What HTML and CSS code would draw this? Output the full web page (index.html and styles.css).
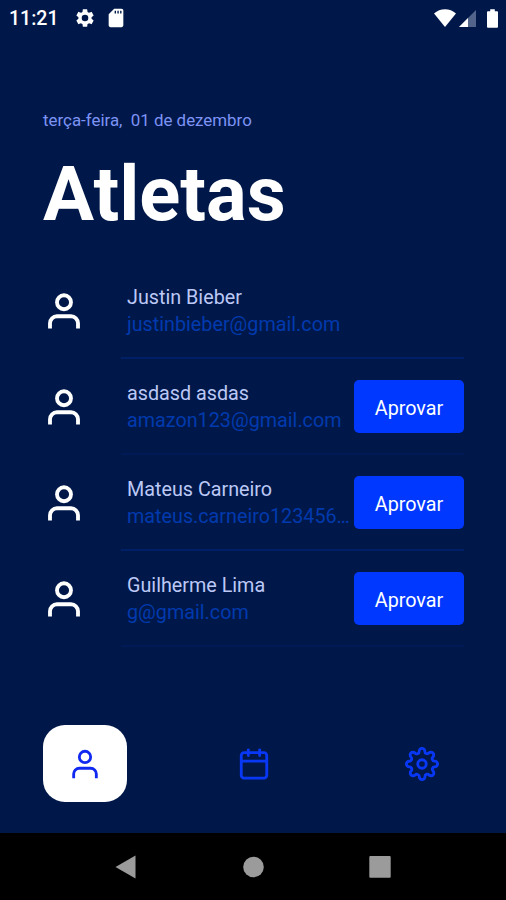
FILE: index.html
```html
<!DOCTYPE html>
<html lang="pt-BR">

<head>
    <meta charset="UTF-8">
    <meta name="viewport" content="width=device-width, initial-scale=1.0">
    <title>Atletas</title>
    <link rel="stylesheet" href="styles.css">
</head>

<body>
    <svg class="sprite" width="0" height="0">
        <symbol id="user" viewBox="0 0 24 24">
            <path d="M20 22V19a4 4 0 0 0-4-4H8a4 4 0 0 0-4 4v3"/>
            <circle cx="12" cy="7" r="4"/>
        </symbol>
    </svg>

    <header class="status-bar">
        <span class="clock">11:21</span>
        <svg class="status-gear" width="22" height="22" viewBox="0 0 24 24"><path fill-rule="evenodd" d="M19.14 12.94c.04-.3.06-.61.06-.94 0-.32-.02-.64-.07-.94l2.03-1.58a.49.49 0 0 0 .12-.61l-1.92-3.32a.488.488 0 0 0-.59-.22l-2.39.96c-.5-.38-1.03-.7-1.62-.94l-.36-2.54a.484.484 0 0 0-.48-.41h-3.84c-.24 0-.43.17-.47.41l-.36 2.54c-.59.24-1.13.57-1.62.94l-2.39-.96c-.22-.08-.47 0-.59.22L2.74 8.87c-.12.21-.08.47.12.61l2.03 1.58c-.05.3-.09.63-.09.94s.02.64.07.94l-2.03 1.58a.49.49 0 0 0-.12.61l1.92 3.32c.12.22.37.29.59.22l2.39-.96c.5.38 1.03.7 1.62.94l.36 2.54c.05.24.24.41.48.41h3.84c.24 0 .44-.17.47-.41l.36-2.54c.59-.24 1.13-.56 1.62-.94l2.39.96c.22.08.47 0 .59-.22l1.92-3.32c.12-.22.07-.47-.12-.61l-2.01-1.58zM12 15.6A3.6 3.6 0 1 1 12 8.4a3.6 3.6 0 0 1 0 7.2z"/></svg>
        <svg class="status-card" width="22" height="22" viewBox="0 0 24 24"><path d="M18 2h-8L4 8v12c0 1.1.9 2 2 2h12c1.1 0 2-.9 2-2V4c0-1.1-.9-2-2-2zm-6 5h-1.500V4H12v3zm3 0h-1.500V4H15v3zm3 0h-1.500V4H18v3z"/></svg>
        <svg class="status-wifi" width="22" height="18" viewBox="0 0 22 18"><path d="M0 4.500C6-1.200 16-1.200 22 4.500L11 18z"/></svg>
        <svg class="status-signal" width="17" height="17" viewBox="0 0 17 17"><path class="dim" d="M17 0v17H0z"/><path d="M9 8v9H0z"/></svg>
        <svg class="status-battery" width="11" height="19" viewBox="0 0 12 20"><path d="M3.500 0h5v2H11q1 0 1 1v16q0 1-1 1H1q-1 0-1-1V3q0-1 1-1h2.500z"/></svg>
    </header>

    <main>
        <p class="date">terça-feira,&nbsp; 01 de dezembro</p>
        <h1>Atletas</h1>

        <ul class="athletes">
            <li>
                <svg class="avatar"><use href="#user"/></svg>
                <div class="row">
                    <div class="info">
                        <p class="name">Justin Bieber</p>
                        <p class="email">justinbieber@gmail.com</p>
                    </div>
                </div>
            </li>
            <li>
                <svg class="avatar"><use href="#user"/></svg>
                <div class="row faint">
                    <div class="info">
                        <p class="name">asdasd asdas</p>
                        <p class="email">amazon123@gmail.com</p>
                    </div>
                    <button class="approve">Aprovar</button>
                </div>
            </li>
            <li>
                <svg class="avatar"><use href="#user"/></svg>
                <div class="row">
                    <div class="info">
                        <p class="name">Mateus Carneiro</p>
                        <p class="email">mateus.carneiro123456…</p>
                    </div>
                    <button class="approve">Aprovar</button>
                </div>
            </li>
            <li>
                <svg class="avatar"><use href="#user"/></svg>
                <div class="row faint">
                    <div class="info">
                        <p class="name">Guilherme Lima</p>
                        <p class="email">g@gmail.com</p>
                    </div>
                    <button class="approve">Aprovar</button>
                </div>
            </li>
        </ul>
    </main>

    <nav class="tabs">
        <a class="tab active"><svg><use href="#user"/></svg></a>
        <a class="tab">
            <svg viewBox="0 0 24 24"><rect x="3" y="4" width="18" height="18" rx="2"/><path d="M16 2v4M8 2v4M3 10h18"/></svg>
        </a>
        <a class="tab">
            <svg viewBox="0 0 24 24"><circle cx="12" cy="12" r="3"/><path d="M19.4 15a1.65 1.65 0 0 0 .33 1.82l.06.06a2 2 0 0 1 0 2.83 2 2 0 0 1-2.83 0l-.06-.06a1.65 1.65 0 0 0-1.82-.33 1.65 1.65 0 0 0-1 1.51V21a2 2 0 0 1-2 2 2 2 0 0 1-2-2v-.09A1.65 1.65 0 0 0 9 19.4a1.65 1.65 0 0 0-1.82.33l-.06.06a2 2 0 0 1-2.83 0 2 2 0 0 1 0-2.83l.06-.06a1.65 1.65 0 0 0 .33-1.82 1.65 1.65 0 0 0-1.51-1H3a2 2 0 0 1-2-2 2 2 0 0 1 2-2h.09A1.65 1.65 0 0 0 4.6 9a1.65 1.65 0 0 0-.33-1.82l-.06-.06a2 2 0 0 1 0-2.83 2 2 0 0 1 2.83 0l.06.06a1.65 1.65 0 0 0 1.82.33H9a1.65 1.65 0 0 0 1-1.51V3a2 2 0 0 1 2-2 2 2 0 0 1 2 2v.09a1.65 1.65 0 0 0 1 1.51 1.65 1.65 0 0 0 1.82-.33l.06-.06a2 2 0 0 1 2.83 0 2 2 0 0 1 0 2.83l-.06.06a1.65 1.65 0 0 0-.33 1.82V9a1.65 1.65 0 0 0 1.51 1H21a2 2 0 0 1 2 2 2 2 0 0 1-2 2h-.09a1.65 1.65 0 0 0-1.51 1z"/></svg>
        </a>
    </nav>

    <footer class="system-bar">
        <svg width="22" height="24" viewBox="0 0 22 24"><path d="M.5 12L20.500 .5v23z"/></svg>
        <svg width="22" height="24" viewBox="0 0 22 24"><circle cx="11.500" cy="12" r="10.300"/></svg>
        <svg width="22" height="24" viewBox="0 0 22 24"><rect x=".3" y="1" width="21.400" height="21.800" rx="1"/></svg>
    </footer>
</body>

</html>
```

FILE: styles.css
```css
* {
    box-sizing: border-box;
    margin: 0;
    padding: 0;
}

body {
    width: 506px;
    height: 900px;
    display: flex;
    flex-direction: column;
    overflow: hidden;
    background-color: #001849;
    font-family: Roboto, sans-serif;
    color: #fff;
}

svg {
    display: block;
    flex: none;
}

.sprite {
    position: absolute;
}

.status-bar {
    height: 36px;
    padding: 0 8px 0 9px;
    display: flex;
    align-items: center;
}

.status-bar svg {
    fill: #fff;
}

.status-bar .dim {
    fill: #526489;
}

.clock {
    width: 65px;
    font-size: 19.5px;
    font-weight: 500;
}

.status-card {
    margin-left: 9px;
}

.status-wifi {
    margin-left: auto;
}

.status-signal {
    margin: 0 11px 0 3px;
}

main {
    flex: 1;
    padding: 73px 42px 0 43px;
}

.date {
    font-size: 16.9px;
    line-height: 22px;
    color: #7d93f5;
}

h1 {
    margin-top: 21px;
    font-size: 76px;
    line-height: 84px;
    font-weight: 700;
}

.athletes {
    margin-top: 27px;
    list-style: none;
}

.athletes li {
    display: flex;
    align-items: center;
    height: 96px;
}

.avatar,
.tab svg {
    fill: none;
    stroke: #fff;
    stroke-width: 2;
    stroke-linejoin: round;
}

.avatar {
    width: 42px;
    height: 42px;
    margin: 0 36px 1px 0;
    stroke-width: 2.2;
}

.row {
    flex: 1;
    min-width: 0;
    height: 96px;
    padding-left: 6px;
    display: flex;
    align-items: center;
    border-bottom: 2px solid #001f66;
}

.row.faint {
    border-color: #001a58;
}

.info {
    flex: 1;
    min-width: 0;
    padding-top: 2px;
    white-space: nowrap;
    font-size: 19.75px;
    line-height: 27px;
}

.name {
    color: #bcc8f6;
}

.email {
    color: #003aae;
}

.approve {
    width: 110px;
    height: 53px;
    padding-top: 4px;
    border: none;
    border-radius: 5px;
    background-color: #0038ff;
    font-family: inherit;
    font-size: 19.75px;
    color: #fff;
}

.tabs {
    height: 108px;
    padding: 0 42px 31px 43px;
    display: flex;
    justify-content: space-between;
}

.tab {
    width: 84px;
    height: 77px;
    display: flex;
    align-items: center;
    justify-content: center;
}

.tab.active {
    border-radius: 22px;
    background-color: #fff;
}

.tab svg {
    width: 34px;
    height: 34px;
    stroke: #0838f5;
    stroke-linecap: round;
}

.tab.active svg {
    stroke: #1029f0;
    stroke-linecap: butt;
}

.system-bar {
    height: 67px;
    padding: 0 115px;
    display: flex;
    align-items: center;
    justify-content: space-between;
    background-color: #000;
}

.system-bar svg {
    fill: #9b9b9b;
}
```
